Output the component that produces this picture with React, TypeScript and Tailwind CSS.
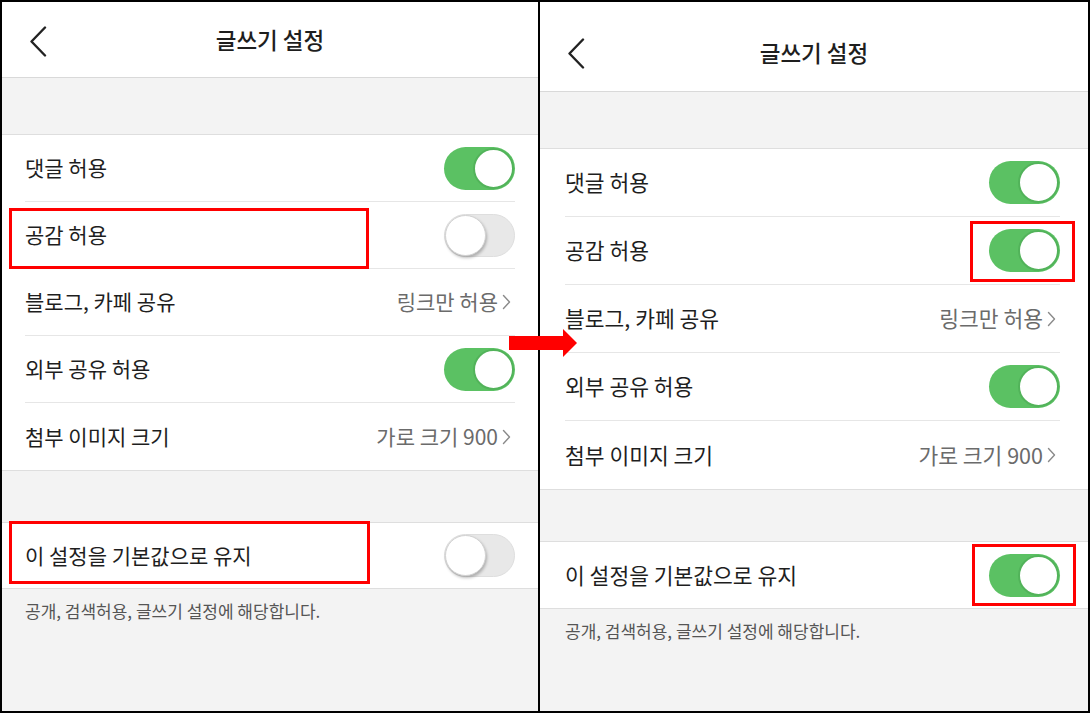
import React from "react";

const FONT = { fontFamily: '"Noto Sans CJK KR", "Noto Sans", sans-serif' };

function BackChevron() {
  return (
    <svg width="18" height="31" viewBox="0 0 18 31" fill="none">
      <path d="M16 1.5 L2.5 15.5 L16 29.5" stroke="#222" strokeWidth="2.4" strokeLinecap="round" strokeLinejoin="round" />
    </svg>
  );
}

function SmallChevron() {
  return (
    <svg width="9" height="16" viewBox="0 0 9 16" fill="none">
      <path d="M1.5 1.5 L7.5 8 L1.5 14.5" stroke="#8a8a8a" strokeWidth="1.4" strokeLinecap="round" strokeLinejoin="round" />
    </svg>
  );
}

function Toggle({ on }: { on: boolean }) {
  if (on) {
    return (
      <div className="w-[71px] h-[43px] rounded-full bg-[#5bc163] relative shrink-0">
        <div className="absolute right-[1px] top-[1px] w-[41px] h-[41px] rounded-full bg-white border-[2px] border-[#52b35a]" />
      </div>
    );
  }
  return (
    <div className="w-[71px] h-[43px] rounded-full bg-[#e8e8e8] border border-[#dedede] relative shrink-0">
      <div className="absolute left-[0px] top-[0px] w-[41px] h-[41px] rounded-full bg-white border border-[#d2d2d2] shadow-[1px_2px_3px_rgba(0,0,0,0.25)]" />
    </div>
  );
}

type Row = { label: string; toggle?: boolean; value?: string };

function Panel({
  rows,
  keepOn,
  headerH,
  headerPt,
  chevTop,
  rowH,
  labelSize,
  padL,
  padR,
}: {
  rows: Row[];
  keepOn: boolean;
  headerH: string;
  headerPt: string;
  chevTop: string;
  rowH: string;
  labelSize: string;
  padL: string;
  padR: string;
}) {
  return (
    <div className="h-full bg-[#f3f3f3] flex flex-col" style={FONT}>
      <div className={`${headerH} ${headerPt} bg-white border-b border-[#d9d9d9] relative flex items-center justify-center shrink-0`}>
        <div className={`absolute left-[27px] ${chevTop}`}>
          <BackChevron />
        </div>
        <span className="text-[22.5px] font-medium text-[#1e1e1e]">글쓰기 설정</span>
      </div>
      <div className="h-[56px] shrink-0" />
      <div className="bg-white border-t border-b border-[#dedede] shrink-0">
        {rows.map((r, i) => (
          <div key={i} className={`${rowH} ${padL} ${padR} flex flex-col`}>
            <div className="flex-1 flex items-center justify-between">
              <span className={`${labelSize} text-[#1e1e1e]`}>{r.label}</span>
              {r.value !== undefined ? (
                <span className={`${labelSize} text-[#6b6b6b] flex items-center gap-[4px] pr-[4px]`}>
                  {r.value}
                  <SmallChevron />
                </span>
              ) : (
                <Toggle on={!!r.toggle} />
              )}
            </div>
            {i < rows.length - 1 && <div className="h-px bg-[#e6e6e6]" />}
          </div>
        ))}
      </div>
      <div className="h-[51px] shrink-0" />
      <div className={`bg-white border-t border-b border-[#dedede] ${rowH} ${padL} ${padR} flex items-center justify-between shrink-0`}>
        <span className={`${labelSize} text-[#1e1e1e]`}>이 설정을 기본값으로 유지</span>
        <Toggle on={keepOn} />
      </div>
      <div className={`${padL} pt-[11px] text-[17px] leading-[22px] text-[#555]`}>
        공개, 검색허용, 글쓰기 설정에 해당합니다.
      </div>
    </div>
  );
}

export default function App() {
  const left: Row[] = [
    { label: "댓글 허용", toggle: true },
    { label: "공감 허용", toggle: false },
    { label: "블로그, 카페 공유", value: "링크만 허용" },
    { label: "외부 공유 허용", toggle: true },
    { label: "첨부 이미지 크기", value: "가로 크기 900" },
  ];
  const right: Row[] = [
    { label: "댓글 허용", toggle: true },
    { label: "공감 허용", toggle: true },
    { label: "블로그, 카페 공유", value: "링크만 허용" },
    { label: "외부 공유 허용", toggle: true },
    { label: "첨부 이미지 크기", value: "가로 크기 900" },
  ];
  return (
    <div className="w-[1090px] h-[713px] bg-black p-[2px] flex gap-[2px] relative overflow-hidden">
      <div className="w-[536px] h-full">
        <Panel
          rows={left}
          keepOn={false}
          headerH="h-[76px]"
          headerPt="pt-0"
          chevTop="top-[24px]"
          rowH="h-[67px]"
          labelSize="text-[21px]"
          padL="pl-[23px]"
          padR="pr-[23px]"
        />
      </div>
      <div className="w-[548px] h-full">
        <Panel
          rows={right}
          keepOn={true}
          headerH="h-[90px]"
          headerPt="pt-[12px]"
          chevTop="top-[36px]"
          rowH="h-[68px]"
          labelSize="text-[21.5px]"
          padL="pl-[25px]"
          padR="pr-[28px]"
        />
      </div>

      {/* red highlight boxes */}
      <div className="absolute left-[9px] top-[208px] w-[360px] h-[61px] border-[3px] border-[#ff0000]" />
      <div className="absolute left-[9px] top-[521px] w-[361px] h-[63px] border-[3px] border-[#ff0000]" />
      <div className="absolute left-[970px] top-[221px] w-[105px] h-[61px] border-[3px] border-[#ff0000]" />
      <div className="absolute left-[972px] top-[544px] w-[104px] h-[62px] border-[3px] border-[#ff0000]" />

      {/* red arrow */}
      <svg className="absolute left-[509px] top-[329px]" width="68" height="28" viewBox="0 0 68 28">
        <rect x="0" y="7" width="55" height="14" fill="#ff0000" />
        <polygon points="54,0 68,14 54,28" fill="#ff0000" />
      </svg>
    </div>
  );
}
